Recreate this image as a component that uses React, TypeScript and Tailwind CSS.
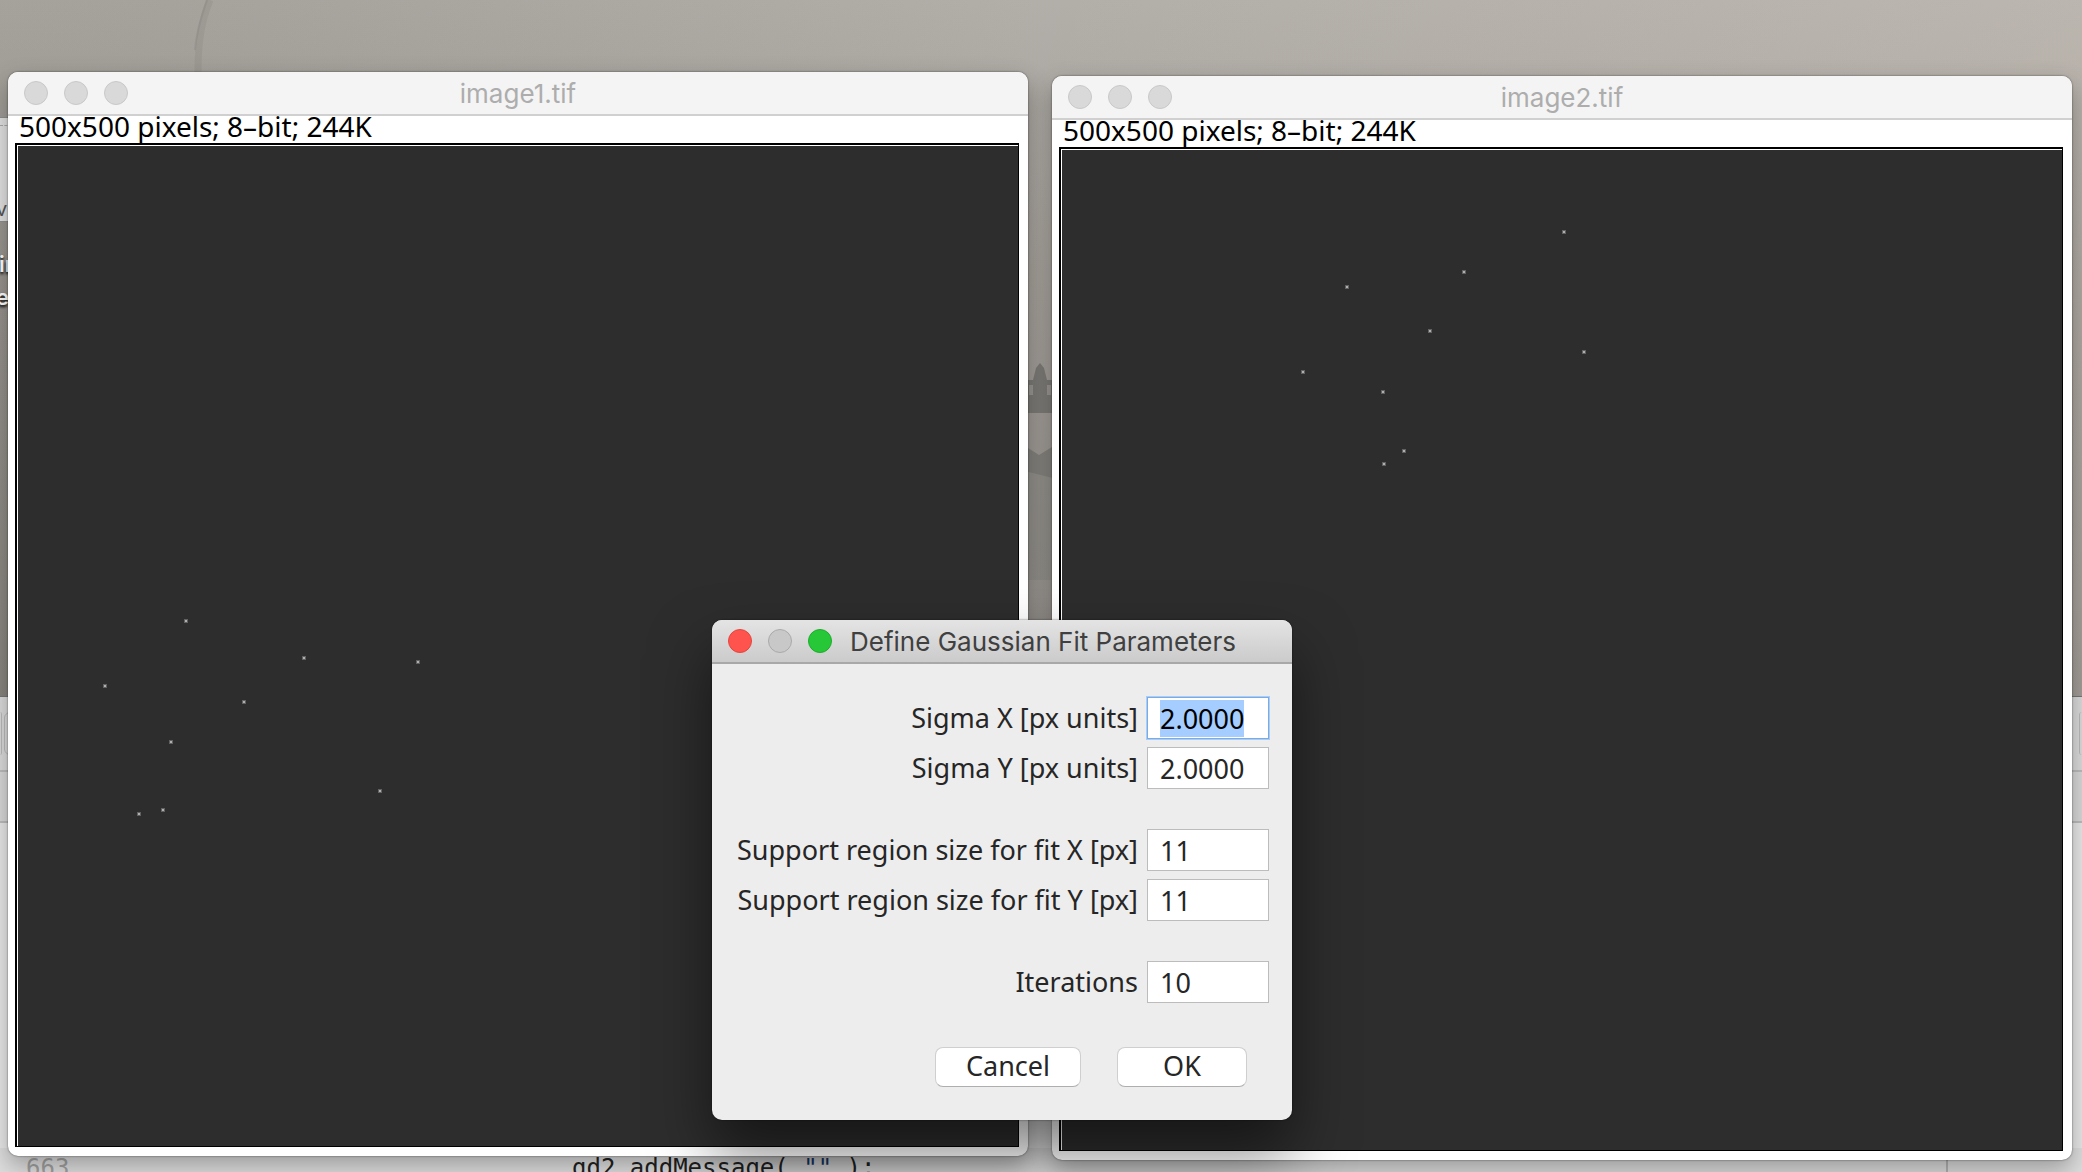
import { useEffect, useRef } from "react";

type Spot = [number, number];

const spots1: Spot[] = [
  [168, 475], [286, 512], [400, 516], [87, 540], [226, 556],
  [153, 596], [121, 668], [145, 664], [362, 645],
];

const spots2: Spot[] = [
  [502, 82], [402, 122], [285, 137], [368, 181], [522, 202],
  [241, 222], [321, 242], [342, 301], [322, 314],
];

function Wallpaper() {
  return (
    <div className="absolute inset-0 bg-linear-to-b from-[#aeaaa4] via-[#9f9a94] via-25% to-[#8f8b86] to-60%">
      <div className="absolute inset-0 bg-linear-to-r from-black/5 via-white/5 to-[#f0e4da]/20" />
      <svg className="absolute top-0 left-[180px]" width="50" height="72" viewBox="0 0 50 72" aria-hidden="true">
        <path d="M30 0C22 20 18 38 18 72" fill="none" stroke="#8b8882" strokeWidth="7" opacity="0.3" />
        <path d="M27 0C20 20 16 36 15 50" fill="none" stroke="#7d7b76" strokeWidth="2" opacity="0.25" />
      </svg>
      <svg className="absolute top-[340px] left-[1028px]" width="24" height="356" viewBox="0 0 24 356" aria-hidden="true">
        <path d="M0 40H5L8 28L12 23L16 28L19 40H24V73H0Z" fill="#7c7a76" />
        <path d="M1 45h4v10H1zM19 45h4v10h-4z" fill="#999691" />
        <path d="M0 108L11 115L24 107V138L0 132Z" fill="#83817c" />
        <path d="M0 132L24 138V240H0Z" fill="#8b8883" opacity="0.6" />
      </svg>
    </div>
  );
}

function BackgroundWindows() {
  return (
    <>
      <div className="absolute top-[117px] left-0 flex h-[105px] w-4 flex-col justify-end border-y border-[#8f8f8f] bg-[#e2e2e2]">
        <div className="mb-auto h-2 border-b border-dashed border-[#aaa]" />
        <span className="-ml-1 font-['Inter'] text-[20px] leading-6 text-[#555]">v</span>
      </div>
      <div className="absolute top-[248px] left-0 w-4 font-['Inter'] text-[22px] leading-[33px] font-semibold text-white [text-shadow:0_2px_3px_#000]">
        <div className="-ml-px">in</div>
        <div className="-ml-1">e</div>
      </div>
      <div className="absolute inset-x-0 top-[696px] bottom-0 flex flex-col border-t border-[#777] bg-[#e9e9e9]">
        <div className="flex h-[75px] items-center justify-between border-b-2 border-[#bdbdbd] bg-[#dcdcdc]">
          <div className="flex gap-[2px]">
            <div className="h-[43px] w-[2px] rounded-r-md border-r border-[#bbb]" />
            <div className="h-[43px] w-10 rounded-md border border-[#bbb]" />
          </div>
          <div className="h-[43px] w-[3px] rounded-l-md border-l border-[#bbb]" />
        </div>
        <div className="h-[51px] shrink-0 border-b-2 border-[#bdbdbd] bg-[#d9d9d9]" />
        <div className="grow" />
        <div className="flex h-[24px] shrink-0 bg-[#dedede] font-['DejaVu_Sans_Mono'] text-[24px] leading-10 whitespace-pre">
          <span className="w-[572px] pl-[26px] text-[#a0a0a0]">663</span>
          <code className="grow font-['DejaVu_Sans_Mono'] text-[#222]">
            gd2<span className="text-[#d0203c]">.</span>addMessage( <span className="text-[#173a6b]">""</span> );
          </code>
          <div className="mr-[134px] w-[2px] bg-[#b4b4b4]" />
        </div>
      </div>
    </>
  );
}

function ImageWindow({ title, spots, className }: { title: string; spots: Spot[]; className: string }) {
  return (
    <section
      className={
        "relative self-start overflow-hidden rounded-[10px] bg-white shadow-[0_0_2px_rgba(0,0,0,0.6),0_10px_24px_rgba(0,0,0,0.3)] " +
        className
      }
    >
      <header className="relative flex h-11 items-center justify-center border-b-2 border-[#d0d0d0] bg-[#f4f4f4]">
        <div className="absolute left-4 flex gap-4">
          <button aria-label="Close" className="size-6 rounded-full border border-[#c8c8c8] bg-[#d9d9d9]" />
          <button aria-label="Minimize" className="size-6 rounded-full border border-[#c8c8c8] bg-[#d9d9d9]" />
          <button aria-label="Zoom" className="size-6 rounded-full border border-[#c8c8c8] bg-[#d9d9d9]" />
        </div>
        <h1 className="pt-0.5 font-['Inter'] text-[26px] leading-10 text-[#adadad]">{title}</h1>
      </header>
      <div className="pr-[9px] pb-[9px] pl-[7px]">
        <p className="h-[27px] pl-1 font-['Noto_Sans'] text-[28px] leading-5 whitespace-nowrap text-black">
          500x500 pixels; 8–bit; 244K
        </p>
        <div className="aspect-square border-2 border-r border-b border-black bg-[#2d2d2d]">
          <div className="size-full border-t border-l border-white">
            <svg className="size-full" viewBox="0 0 1000 1000" role="img" aria-label={title}>
              {spots.map(([x, y]) => (
                <g key={x + "-" + y} fill="#b0b0b0">
                  <rect x={x - 2} y={y - 2} width="4" height="4" opacity="0.4" />
                  <rect x={x - 1} y={y - 1} width="2" height="2" />
                </g>
              ))}
            </svg>
          </div>
        </div>
      </div>
    </section>
  );
}

function Field({ id, label, value, className = "" }: { id: string; label: string; value: string; className?: string }) {
  const ref = useRef<HTMLInputElement>(null);
  useEffect(() => {
    if (id === "sigma-x") {
      ref.current?.focus();
      ref.current?.select();
    }
  }, [id]);
  return (
    <div className={"flex items-center justify-end gap-[9px] " + className}>
      <label htmlFor={id} className="whitespace-nowrap">{label}</label>
      <input
        ref={ref}
        id={id}
        type="text"
        defaultValue={value}
        className="h-[42px] w-[122px] border border-[#bcbcbc] bg-white px-3 outline-none selection:bg-[#a5cdff] selection:text-black focus:border-[#7aabe6] focus:shadow-[0_0_0_1px_#a9cdf5]"
      />
    </div>
  );
}

function GaussianDialog() {
  return (
    <form
      role="dialog"
      aria-labelledby="dialog-title"
      onSubmit={(e) => e.preventDefault()}
      className="absolute top-[620px] left-[712px] w-[580px] overflow-hidden rounded-[10px] bg-[#ededed] font-['Noto_Sans'] text-[27px] leading-8 text-[#262626] shadow-[0_0_2px_rgba(0,0,0,0.6),0_32px_60px_rgba(0,0,0,0.5)]"
    >
      <header className="flex h-11 items-center border-b-2 border-[#a8a8a8] bg-linear-to-b from-[#e4e4e4] to-[#cbcbcb] pl-4">
        <div className="flex gap-4">
          <button type="button" aria-label="Close" className="size-6 rounded-full border border-[#e2463f] bg-[#ff544d]" />
          <button type="button" aria-label="Minimize" className="size-6 rounded-full border border-[#aaa] bg-[#c8c8c8]" />
          <button type="button" aria-label="Zoom" className="size-6 rounded-full border border-[#1dad2c] bg-[#26c838]" />
        </div>
        <h2 id="dialog-title" className="ml-[18px] pt-0.5 font-['Inter'] text-[26px] whitespace-nowrap text-[#404040]">
          Define Gaussian Fit Parameters
        </h2>
      </header>
      <div className="flex flex-col gap-2 pt-[33px] pr-[23px]">
        <Field id="sigma-x" label="Sigma X [px units]" value="2.0000" />
        <Field id="sigma-y" label="Sigma Y [px units]" value="2.0000" />
        <Field id="support-x" label="Support region size for fit X [px]" value="11" className="mt-8" />
        <Field id="support-y" label="Support region size for fit Y [px]" value="11" />
        <Field id="iterations" label="Iterations" value="10" className="mt-8" />
      </div>
      <div className="mt-11 mb-[33px] flex justify-end gap-9 pr-[45px]">
        <button type="button" className="h-10 w-[146px] rounded-lg border border-[#cfcfcf] border-b-[#aeaeae] bg-white pb-0.5">
          Cancel
        </button>
        <button type="submit" className="h-10 w-[130px] rounded-lg border border-[#cfcfcf] border-b-[#aeaeae] bg-white pb-0.5">
          OK
        </button>
      </div>
    </form>
  );
}

export default function App() {
  return (
    <main className="relative h-screen overflow-hidden">
      <Wallpaper />
      <BackgroundWindows />
      <div className="relative grid grid-cols-2 gap-6 pt-[72px] pr-2.5 pl-2">
        <ImageWindow title="image1.tif" spots={spots1} className="" />
        <ImageWindow title="image2.tif" spots={spots2} className="mt-1" />
      </div>
      <GaussianDialog />
    </main>
  );
}
